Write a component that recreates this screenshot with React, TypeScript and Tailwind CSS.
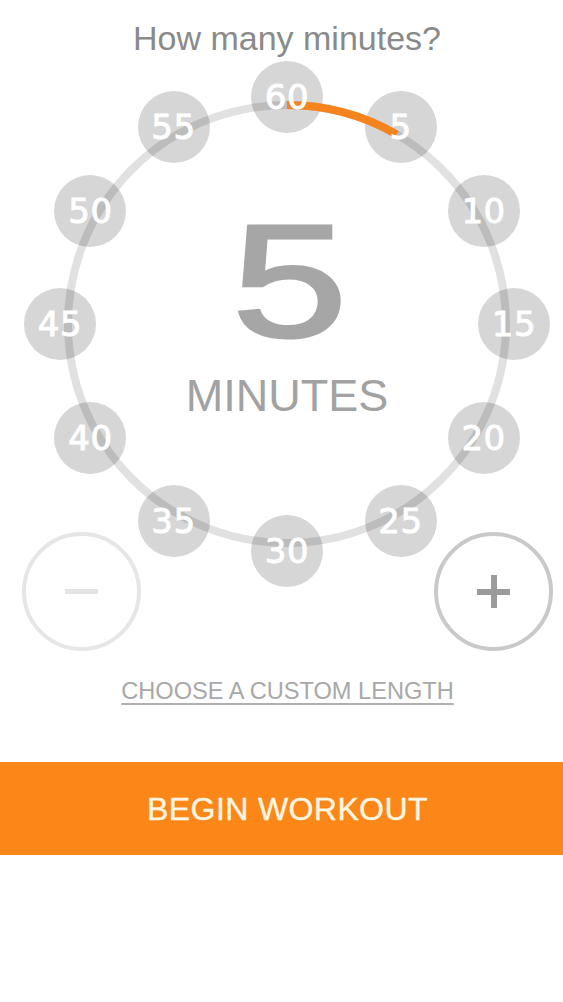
import React, { useState } from 'react';

// Minute stops around the dial, clockwise from the top
const STOPS = [60, 5, 10, 15, 20, 25, 30, 35, 40, 45, 50, 55];

const DIAL = 528; // canvas size
const C = DIAL / 2; // canvas centre
const NODE_R = 227; // radius the number bubbles sit on
const RING_R = 219; // radius of the track

function arcPath(minutes: number) {
  const a = (Math.min(minutes, 59.99) / 60) * Math.PI * 2;
  const x = C + RING_R * Math.sin(a);
  const y = C - RING_R * Math.cos(a);
  const large = a > Math.PI ? 1 : 0;
  return `M ${C} ${C - RING_R} A ${RING_R} ${RING_R} 0 ${large} 1 ${x} ${y}`;
}

export default function App() {
  const [minutes, setMinutes] = useState(5);

  return (
    <div className="w-[563px] h-[1002px] bg-white overflow-hidden font-['Liberation_Sans',Arial,sans-serif]">
      {/* Title */}
      <div className="h-[60px] pt-[18px] pl-[11px] text-center text-[34px] leading-[40px] text-[#8a8a8a]">
        How many minutes?
      </div>

      {/* Dial canvas */}
      <div className="relative ml-[23px] w-[528px] h-[528px]">
        <svg className="absolute inset-0" width={DIAL} height={DIAL}>
          <circle cx={C} cy={C} r={RING_R} fill="none" stroke="#e1e1e1" strokeWidth={8} />
        </svg>

        {STOPS.map((m, i) => {
          const a = (i / 12) * Math.PI * 2;
          return (
            <div
              key={m}
              className="absolute w-[72px] h-[72px] -ml-[36px] -mt-[36px] rounded-full bg-black/[0.16]"
              style={{ left: C + NODE_R * Math.sin(a), top: C - NODE_R * Math.cos(a) }}
            />
          );
        })}

        <svg className="absolute inset-0" width={DIAL} height={DIAL}>
          <path d={arcPath(minutes)} fill="none" stroke="#f5841f" strokeWidth={8} />
        </svg>

        {STOPS.map((m, i) => {
          const a = (i / 12) * Math.PI * 2;
          return (
            <button
              key={m}
              onClick={() => setMinutes(m)}
              className="absolute w-[72px] h-[72px] -ml-[36px] -mt-[36px] rounded-full flex items-center justify-center text-white text-[34px] leading-none tracking-[0.5px] font-['DejaVu_Sans',sans-serif] [-webkit-text-stroke:0.9px_white]"
              style={{ left: C + NODE_R * Math.sin(a), top: C - NODE_R * Math.cos(a) }}
            >
              {m}
            </button>
          );
        })}

        {/* Centre readout */}
        <div className="absolute inset-0 flex flex-col items-center pt-[141px] pointer-events-none">
          <div className="text-[160px] leading-none text-[#a6a6a6] scale-x-[1.3] ml-[4px] [-webkit-text-stroke:3px_#a6a6a6]">
            {minutes}
          </div>
          <div className="mt-[12px] text-[45px] leading-none text-[#a2a2a2]">MINUTES</div>
        </div>
      </div>

      {/* Step buttons */}
      <div className="-mt-[56px] flex justify-between pl-[22px] pr-[10px]">
        <button
          onClick={() => setMinutes((v) => Math.max(1, v - 1))}
          className="w-[119px] h-[119px] rounded-full border-4 border-[#e6e6e6] flex items-center justify-center"
        >
          <span className="block w-[33px] h-[5px] bg-[#e4e4e4]" />
        </button>
        <button
          onClick={() => setMinutes((v) => Math.min(60, v + 1))}
          className="relative w-[119px] h-[119px] rounded-full border-4 border-[#c9c9c9] flex items-center justify-center"
        >
          <span className="block w-[33px] h-[6px] bg-[#9b9b9b]" />
          <span className="absolute w-[6px] h-[33px] bg-[#9b9b9b]" />
        </button>
      </div>

      <div className="mt-[26px] pl-[12px] text-center text-[23.6px] leading-[28px] text-[#a8a8a8]">
        <span className="underline decoration-2 underline-offset-[4px] decoration-[#b0b0b0]">
          CHOOSE A CUSTOM LENGTH
        </span>
      </div>

      <button className="mt-[57px] w-full h-[93px] pl-[12px] bg-[#fc8719] flex items-center justify-center text-[32px] tracking-[0.4px] text-[#fff6e2] [-webkit-text-stroke:0.4px_#fff6e2]">
        BEGIN WORKOUT
      </button>
    </div>
  );
}
